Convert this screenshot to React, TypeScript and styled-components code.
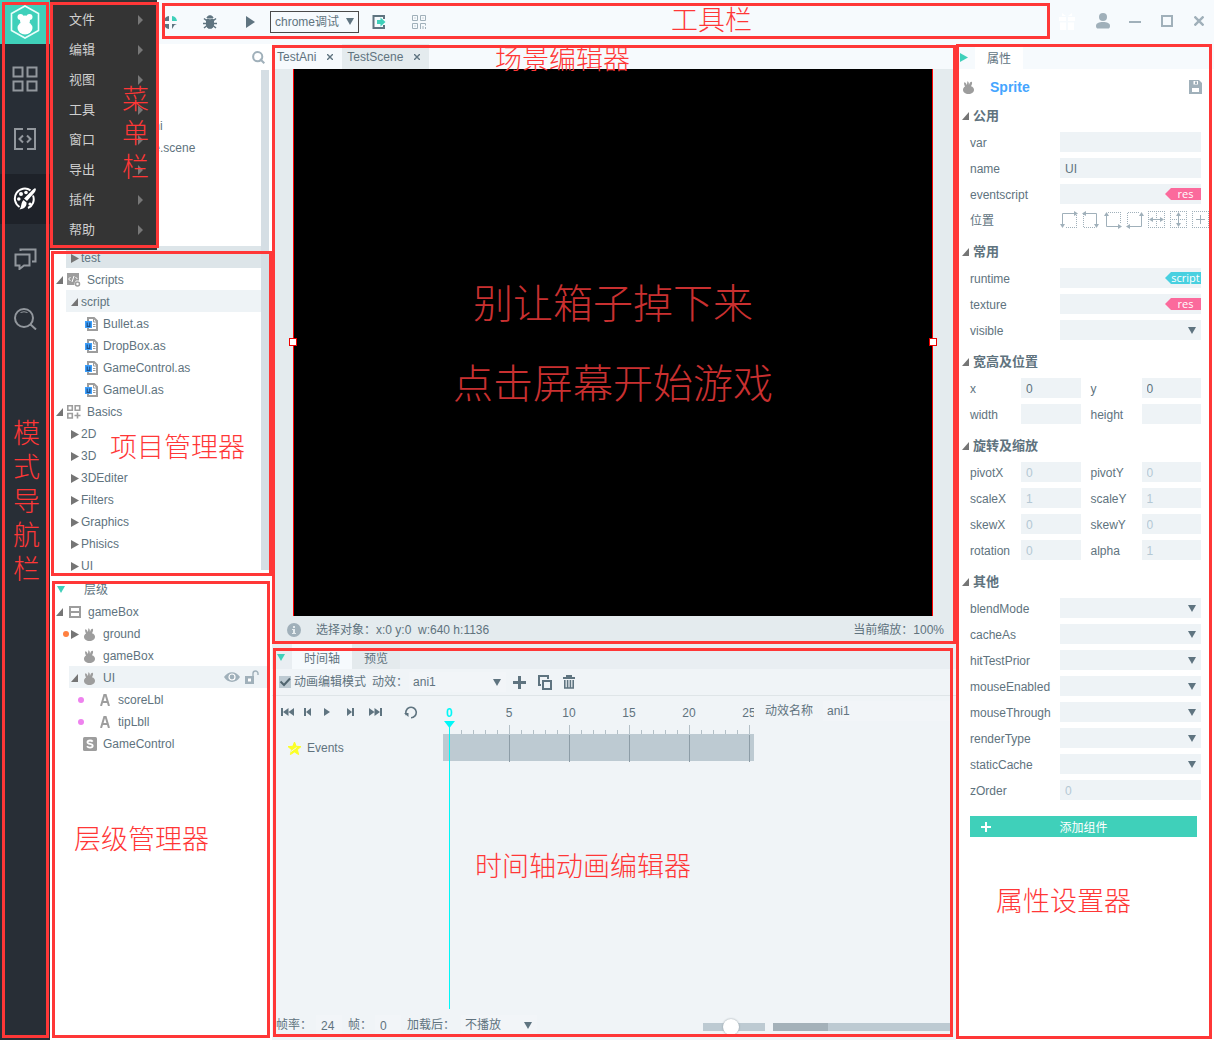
import React from "react";
import styled, { createGlobalStyle, css } from "styled-components";

const color = {
  red: "#ff3737",
  teal: "#3fd0ba",
  cyan: "#00f8f8",
  text: "#60737e",
  icon: "#9d9d9d",
  slate: "#5f7480",
  field: "#eef3f6",
  bar: "#f6fafd",
  mute: "#a0b0ba",
};

const GlobalStyle = createGlobalStyle`
  * { box-sizing: border-box; }
  body { margin: 0; background: #fff; }
  body, button, input, select {
    font-family: "Liberation Sans", "Noto Sans CJK SC", sans-serif;
    font-size: 12px;
    line-height: 16px;
    color: ${color.text};
  }
  button { border: 0; padding: 0; background: none; cursor: pointer; }
  ul { list-style: none; margin: 0; padding: 0; }
  h2, p { margin: 0; }
  svg { display: block; flex: none; }
`;

/* ---------- shell ---------- */

const Shell = styled.div`
  position: relative;
  display: grid;
  grid-template-columns: 50px 222px minmax(0, 1fr) 258px;
  grid-template-rows: 44px minmax(0, 1fr);
  height: 100vh;
  min-height: 900px;
`;

const Callout = styled.div<{ $inset: string }>`
  position: absolute;
  inset: ${(p) => p.$inset};
  border: 3px solid ${color.red};
  pointer-events: none;
  z-index: 4;
`;

const CalloutLabel = styled.span<{ $left: number; $top: number; $vertical?: boolean }>`
  position: absolute;
  left: ${(p) => p.$left}px;
  top: ${(p) => p.$top}px;
  font-size: 27px;
  line-height: 34px;
  font-weight: 300;
  color: ${color.red};
  pointer-events: none;
  z-index: 5;
  ${(p) => (p.$vertical ? css`width: 27px; word-break: break-all;` : css`white-space: nowrap;`)}
`;

/* ---------- mode rail ---------- */

const Rail = styled.nav`
  position: relative;
  grid-row: 1 / 3;
  display: flex;
  flex-direction: column;
  gap: 10px;
  background: #282e36;
`;

const Logo = styled.div`
  display: flex;
  align-items: center;
  justify-content: center;
  height: 44px;
  background: ${color.teal};
`;

const RailButton = styled.button<{ $active?: boolean }>`
  display: flex;
  align-items: center;
  justify-content: center;
  height: 50px;
  color: ${(p) => (p.$active ? "#fff" : "#92979d")};
  background: ${(p) => (p.$active ? "#1e2229" : "transparent")};
`;

/* ---------- menu ---------- */

const Menu = styled.div`
  position: absolute;
  left: 50px;
  top: 0;
  width: 107px;
  height: 250px;
  padding-top: 5px;
  background: #343434;
  z-index: 3;
`;

const MenuItem = styled.button`
  display: flex;
  align-items: center;
  justify-content: space-between;
  width: 100%;
  height: 30px;
  padding: 0 14px 0 19px;
  font-size: 13px;
  color: #cfcfcf;
`;

/* ---------- toolbar ---------- */

const Toolbar = styled.header`
  position: relative;
  grid-column: 2 / 5;
  display: flex;
  align-items: center;
  padding-left: 100px;
  background: ${color.bar};
`;

const ToolButton = styled.button<{ $w?: number }>`
  display: flex;
  align-items: center;
  justify-content: center;
  width: ${(p) => p.$w ?? 40}px;
  height: 32px;
  color: ${color.slate};
`;

const WindowButtons = styled.div`
  display: flex;
  margin: 0 -1px 2px auto;
  button { color: ${color.mute}; }
  button:first-child { color: #fff; margin-right: 4px; }
`;

/* ---------- shared selects and inputs ---------- */

const SelectWrap = styled.span<{ $w?: number; $outlined?: boolean; $plain?: boolean }>`
  position: relative;
  display: block;
  width: ${(p) => (p.$w ? `${p.$w}px` : "100%")};
  select {
    display: block;
    appearance: none;
    width: 100%;
    height: ${(p) => (p.$outlined ? 22 : 20)}px;
    padding: 0 4px;
    border: ${(p) => (p.$outlined ? "1px solid #4a4a4a" : "0")};
    border-radius: 0;
    background: ${(p) => (p.$outlined ? "transparent" : p.$plain ? "#f2f5f8" : color.field)};
  }
  svg {
    position: absolute;
    right: 5px;
    top: 7px;
    pointer-events: none;
  }
`;

const Field = styled.input`
  display: block;
  width: 100%;
  min-width: 0;
  height: 20px;
  padding: 1px 5px 0;
  border: 0;
  background: ${color.field};
  &::placeholder { color: #b4c8d4; opacity: 1; }
`;

/* ---------- left column ---------- */

const Side = styled.aside`
  display: grid;
  grid-template-rows: 532px minmax(0, 1fr);
  background: #fff;
`;

const Pane = styled.section`
  position: relative;
  min-height: 0;
`;

const SearchRow = styled.div`
  display: flex;
  justify-content: flex-end;
  align-items: center;
  height: 26px;
  padding-right: 7px;
  color: ${color.mute};
`;

const Scroller = styled.div`
  margin-right: 3px;
  display: grid;
  grid-template-columns: 1fr 8px;
`;

const ScrollThumb = styled.div`
  height: 500px;
  background: #d5dee4;
`;

const PagesTree = styled.ul`
  height: 176px;
  padding-top: 44px;
`;

const Branch = styled.ul<{ $pad: number }>`
  padding-left: ${(p) => p.$pad}px;
`;

const Row = styled.li<{ $indent: number; $fill?: string }>`
  position: relative;
  display: flex;
  align-items: center;
  height: 22px;
  padding: 2px 0 0 ${(p) => p.$indent}px;
  background: ${(p) => p.$fill ?? "transparent"};
  white-space: nowrap;
`;

const Slot = styled.span<{ $w: number }>`
  display: flex;
  flex: none;
  width: ${(p) => p.$w}px;
  color: ${color.icon};
`;

const Dot = styled.i<{ $left: number; $color: string }>`
  position: absolute;
  left: ${(p) => p.$left}px;
  top: 9px;
  width: 6px;
  height: 6px;
  border-radius: 50%;
  background: ${(p) => p.$color};
`;

const RowTools = styled.span`
  display: flex;
  align-items: center;
  gap: 5px;
  margin-left: auto;
  padding: 0 8px 2px 0;
  color: ${color.mute};
`;

const LayerTree = styled.div`
  margin-right: 5px;
`;

const PaneTitle = styled.div`
  display: flex;
  align-items: center;
  gap: 19px;
  height: 24px;
  padding: 3px 0 0 7px;
`;

/* ---------- scene ---------- */

const Center = styled.main`
  display: grid;
  grid-template-rows: minmax(0, 1fr) 396px;
  min-width: 0;
`;

const Scene = styled.section`
  position: relative;
  display: flex;
  flex-direction: column;
  min-height: 0;
  background: #e4ebee;
`;

const TabStrip = styled.div<{ $tint?: string }>`
  display: flex;
  flex: none;
  height: 25px;
  background: ${(p) => p.$tint ?? color.bar};
`;

const SceneTab = styled.button<{ $selected?: boolean }>`
  display: flex;
  align-items: center;
  gap: 11px;
  padding: 0 9px 0 5px;
  background: ${(p) => (p.$selected ? "#e4ebee" : "transparent")};
`;

const StageArea = styled.div`
  flex: 1;
  min-height: 0;
  padding: 0 23px 0 21px;
`;

const Stage = styled.div`
  position: relative;
  display: flex;
  flex-direction: column;
  align-items: center;
  justify-content: center;
  height: 100%;
  padding-top: 2px;
  border: solid #ff0000;
  border-width: 0 1px;
  background: #000;
`;

const StageText = styled.p`
  font-size: 40px;
  line-height: 80px;
  font-weight: 300;
  color: #c93030;
  white-space: nowrap;
`;

const Handle = styled.i<{ $side: "left" | "right" }>`
  position: absolute;
  ${(p) => p.$side}: -5px;
  top: calc(50% - 5px);
  width: 8px;
  height: 8px;
  border: 1px solid #e00;
  background: #fff;
`;

const Status = styled.div`
  display: flex;
  flex: none;
  align-items: center;
  height: 28px;
  padding: 0 12px 0 15px;
  white-space: pre;
`;

const StatusText = styled.span<{ $end?: boolean }>`
  margin-left: ${(p) => (p.$end ? "auto" : "15px")};
`;

/* ---------- timeline ---------- */

const Timeline = styled.section`
  position: relative;
  display: flex;
  flex-direction: column;
  background: #f0f4f7;
`;

const PanelTab = styled.button<{ $fill: string }>`
  padding: 4px 12px 0;
  background: ${(p) => p.$fill};
`;

const TabMark = styled.span<{ $w: number; $x: number }>`
  display: flex;
  align-items: center;
  width: ${(p) => p.$w}px;
  padding: 1px 0 0 ${(p) => p.$x}px;
`;

const AnimBar = styled.div`
  display: flex;
  flex: none;
  align-items: center;
  height: 27px;
  padding-left: 7px;
  border-bottom: 1px solid #dfe5e8;
`;

const Check = styled.label`
  display: flex;
  align-items: center;
  gap: 3px;
  margin-right: 6px;
  input {
    appearance: none;
    width: 12px;
    height: 12px;
    margin: 0;
    background: #bdcad2;
  }
  span { position: relative; display: flex; }
  svg { position: absolute; left: 0; top: 0; pointer-events: none; }
`;

const Inline = styled.label<{ $gap?: number }>`
  display: flex;
  align-items: center;
  gap: ${(p) => p.$gap ?? 0}px;
  white-space: nowrap;
`;

const Tracks = styled.div`
  display: grid;
  flex: 1;
  grid-template-columns: 171px 311px minmax(0, 1fr);
`;

const Playback = styled.div`
  display: flex;
  align-items: center;
  height: 32px;
  padding-left: 5px;
`;

const EventRow = styled.div`
  display: flex;
  align-items: center;
  gap: 6px;
  height: 40px;
  padding-left: 16px;
`;

const Frames = styled.div`
  position: relative;
  display: flex;
  flex-direction: column;
  overflow: hidden;
`;

const FrameNumbers = styled.div`
  display: flex;
  height: 29px;
  padding-top: 9px;
  margin-left: -24px;
  span { flex: 0 0 60px; text-align: center; }
  span:first-child { color: ${color.cyan}; font-weight: 700; }
`;

const Playhead = styled.div`
  position: absolute;
  left: 1px;
  top: 25px;
  bottom: 1px;
  width: 11px;
  background: linear-gradient(${color.cyan}, ${color.cyan}) 5px 0 / 1px 100% no-repeat;
`;

const AnimName = styled.div`
  padding: 5px 6px 0 11px;
`;

const NameField = styled(Field)`
  padding: 0 4px;
  background: #f2f5f8;
`;

const Footer = styled.footer`
  display: flex;
  flex: none;
  align-items: center;
  gap: 6px;
  height: 30px;
  padding: 0 6px 0 4px;
`;

const TinyField = styled(Field)`
  width: 26px;
  background: #f2f5f8;
`;

const Zoom = styled.input`
  appearance: none;
  width: 62px;
  height: 16px;
  margin: 3px 2px 0 auto;
  background: linear-gradient(#bdcad2, #bdcad2) 0 4px / 100% 8px no-repeat;
  &::-webkit-slider-thumb {
    appearance: none;
    width: 16px;
    height: 16px;
    border-radius: 50%;
    background: #fff;
    box-shadow: 0 0 2px #8b979e;
  }
`;

const HScroll = styled.div`
  width: 177px;
  height: 8px;
  margin-top: 3px;
  background: linear-gradient(#a4b1b9, #a4b1b9) 0 0 / 55px 100% no-repeat #bdcad2;
`;

/* ---------- properties ---------- */

const Props = styled.aside`
  position: relative;
  background: #fff;
`;

const SpriteHead = styled.div`
  display: flex;
  align-items: center;
  height: 28px;
  padding: 8px 12px 0 7px;
  color: ${color.icon};
  h2 { margin-left: 16px; font-size: 14px; line-height: 20px; color: #45a5ff; }
  button { margin-left: auto; color: ${color.mute}; }
`;

const GroupTitle = styled.h2`
  display: flex;
  align-items: center;
  gap: 4px;
  height: 32px;
  padding: 5px 0 0 6px;
  font-size: 13px;
  line-height: 20px;
  font-weight: 700;
`;

const Caption = styled.span`
  padding-top: 2px;
`;

const PropRow = styled.label`
  display: grid;
  grid-template-columns: 90px minmax(0, 1fr);
  align-items: center;
  height: 26px;
  padding: 0 13px 0 14px;
`;

const PairRow = styled.div`
  display: grid;
  grid-template-columns: 1fr 1fr;
  gap: 10px;
  padding: 0 13px 0 14px;
  label {
    display: grid;
    grid-template-columns: 51px minmax(0, 1fr);
    align-items: center;
    height: 26px;
  }
`;

const AlignRow = styled.div`
  display: grid;
  grid-template-columns: 90px minmax(0, 1fr);
  align-items: center;
  height: 26px;
  padding-left: 14px;
`;

const AlignIcons = styled.div`
  display: flex;
  gap: 4px;
  overflow: hidden;
  color: ${color.mute};
`;

const Tagged = styled.span`
  position: relative;
  display: block;
`;

const Tag = styled.span<{ $color: string }>`
  position: absolute;
  right: 0;
  top: 4px;
  width: 36px;
  padding-left: 5px;
  clip-path: polygon(0 50%, 6px 0, 100% 0, 100% 100%, 6px 100%);
  background: ${(p) => p.$color};
  color: #fff;
  font-family: "Open Sans", sans-serif;
  font-size: 11px;
  line-height: 12px;
  text-align: center;
`;

const AddButton = styled.button`
  display: grid;
  grid-template-columns: 32px 1fr 32px;
  align-items: center;
  justify-items: center;
  width: calc(100% - 31px);
  height: 21px;
  margin: 13px 17px 0 14px;
  background: ${color.teal};
  color: #fff;
`;

/* ---------- icons ---------- */

const Down = ({ fill = color.slate }: { fill?: string }) => (
  <svg width="8" height="7" viewBox="0 0 8 7"><path d="M0 0h8L4 7z" fill={fill} /></svg>
);
const Closed = ({ fill = "#757575" }: { fill?: string }) => (
  <svg width="8" height="9" viewBox="0 0 8 9"><path d="M0 0l8 4.500L0 9z" fill={fill} /></svg>
);
const Open = () => (
  <svg width="7" height="8" viewBox="0 0 7 8"><path d="M7 0v8H0z" fill="#757575" /></svg>
);
const Rabbit = () => (
  <svg width="11" height="13" viewBox="0 0 11 13" fill="currentColor">
    <path d="M1.300 1.400C2 .8 3.200 2.400 3.900 4.300L4.400.2C5.800.4 6 2.600 5.900 4.300 6.300 2.500 7.300.6 8.700.8c.9.600.2 3-.7 4.400C10 5.700 11 7.200 11 8.800 11 11.400 8.700 13 5.500 13S0 11.400 0 8.800C0 7.400.8 6.200 2.100 5.500 1.300 4.200.7 2 1.300 1.400z" />
  </svg>
);
const Lens = () => (
  <svg width="13" height="13" viewBox="0 0 13 13" fill="none" stroke="currentColor" strokeWidth="2">
    <circle cx="5.700" cy="5.700" r="4.600" /><path d="M8 8l4.300 4.300" />
  </svg>
);
const FileIcon = () => (
  <svg width="14" height="14" viewBox="0 0 14 14">
    <path d="M3 1h6l3 3v9H3z" fill="#fff" stroke="#9d9d9d" strokeWidth="2" />
    <path d="M8.500 1v4H12" fill="none" stroke="#9d9d9d" />
    <path d="M8 7.500h2.500M8 9.500h2.500" stroke="#9d9d9d" />
    <path d="M0 4h7v7H0z" fill="#3d9ffb" />
    <path d="M2.200 5.500v3.800h2.600V5.500" fill="none" stroke="#1d4f88" strokeWidth="1.200" />
  </svg>
);
const ScriptsIcon = () => (
  <svg width="15" height="14" viewBox="0 0 15 14">
    <path d="M1 0h12v7.500H10L8.500 10v2H1z" fill="currentColor" />
    <path d="M4.500 4L2.600 6l1.900 2M9.500 4l1.900 2M8 3L6 9" fill="none" stroke="#fff" />
    <circle cx="11.500" cy="11" r="2" fill="none" stroke="currentColor" strokeWidth="1.500" />
  </svg>
);
const BasicsIcon = () => (
  <svg width="15" height="14" viewBox="0 0 15 14" fill="none" stroke="currentColor" strokeWidth="1.600">
    <path d="M1.800.8h4.500v4.500H1.800zM9.200.8h4.500v4.500H9.200zM1.800 8.500h4.500V13H1.800zM8.500 10.500h6M11.500 7.500v6" />
  </svg>
);
const BoxIcon = () => (
  <svg width="12" height="12" viewBox="0 0 12 12" fill="none" stroke="currentColor" strokeWidth="2">
    <path d="M1 1h10v10H1zM1 6h10" />
  </svg>
);
const LabelIcon = () => (
  <svg width="10" height="12" viewBox="0 0 10 12" fill="none" stroke="currentColor" strokeWidth="2">
    <path d="M1 12L4.300 1h1.400L9 12M2.500 8h5" />
  </svg>
);
const BadgeIcon = () => (
  <svg width="14" height="14" viewBox="0 0 14 14">
    <rect width="14" height="14" rx="1.500" fill="currentColor" />
    <path d="M9.700 4.600C9 3.700 8.200 3.500 7 3.500c-1.500 0-2.500.6-2.500 1.700C4.500 7.600 9.700 6.200 9.700 8.800c0 1.200-1.200 1.800-2.700 1.800-1.300 0-2.300-.4-3-1.300" fill="none" stroke="#fff" strokeWidth="1.800" />
  </svg>
);
const EyeIcon = () => (
  <svg width="16" height="10" viewBox="0 0 16 10">
    <path d="M0 5C4-1.500 12-1.500 16 5 12 11.500 4 11.500 0 5z" fill="currentColor" />
    <circle cx="8" cy="5" r="3" fill="none" stroke="#fff" strokeWidth="1.200" />
  </svg>
);
const LockIcon = () => (
  <svg width="14" height="14" viewBox="0 0 14 14">
    <path d="M0 6h9v8H0z" fill="currentColor" /><path d="M3 8.500h3v3H3z" fill="#fff" />
    <path d="M8 6V3.500a2.500 2.500 0 0 1 5 0V5" fill="none" stroke="currentColor" strokeWidth="1.400" />
  </svg>
);
const LogoIcon = () => (
  <svg width="30" height="34" viewBox="0 0 30 34">
    <path d="M15 1l13.500 7.500v17L15 33 1.500 25.500v-17z" fill="none" stroke="#e9fffb" strokeWidth="1.600" />
    <circle cx="10.500" cy="12" r="3" fill="#fff" /><circle cx="19.500" cy="12" r="3" fill="#fff" />
    <ellipse cx="15" cy="15.500" rx="5" ry="5" fill="#fff" /><ellipse cx="15" cy="23" rx="7.500" ry="6.500" fill="#fff" />
  </svg>
);

type Glyph = () => React.ReactElement;
const railIcons: { name: string; active?: boolean; icon: Glyph }[] = [
  {
    name: "grid",
    icon: () => (
      <svg width="26" height="26" viewBox="0 0 26 26" fill="none" stroke="currentColor" strokeWidth="2">
        <path d="M1.500 1.500h9v9h-9zM15.500 1.500h9v9h-9zM1.500 15.500h9v9h-9zM15.500 15.500h9v9h-9z" />
      </svg>
    ),
  },
  {
    name: "code",
    icon: () => (
      <svg width="22" height="22" viewBox="0 0 22 22" fill="none" stroke="currentColor" strokeWidth="2">
        <path d="M9 1H1v20h8M13 1h8v20h-8M9 7.500L5.500 11 9 14.500M13 7.500l3.500 3.500-3.500 3.500" />
      </svg>
    ),
  },
  {
    name: "design",
    active: true,
    icon: () => (
      <svg width="24" height="24" viewBox="0 0 24 24">
        <path d="M17.500 3.300A10 10 0 1 0 6.500 20M20 8.500c2 5-.2 10.500-5 12.500" fill="none" stroke="currentColor" strokeWidth="2" />
        <path d="M22.500 1.500c.8.800.3 2-1 4L14 14l-3-2.500L18 4.500c2-2 3.700-3.600 4.500-3zM10.500 13l3 2.500c.3 3-1 6-7 7 2-2 1.500-7.500 4-9.500z" fill="currentColor" />
        <circle cx="8" cy="7" r="2" fill="currentColor" /><circle cx="13" cy="5.500" r="1.800" fill="currentColor" />
        <circle cx="5.800" cy="12" r="1.800" fill="currentColor" /><circle cx="17" cy="17" r="1.600" fill="currentColor" />
      </svg>
    ),
  },
  {
    name: "chat",
    icon: () => (
      <svg width="23" height="22" viewBox="0 0 23 22" fill="none" stroke="currentColor" strokeWidth="2">
        <path d="M1.500 6.500h14v11H10L5.500 21v-3.500h-4zM6.500 3V1.500h15v12H18" />
      </svg>
    ),
  },
  {
    name: "search",
    icon: () => (
      <svg width="23" height="22" viewBox="0 0 23 22" fill="none" stroke="currentColor" strokeWidth="2">
        <circle cx="10" cy="10" r="9" /><path d="M16 16l6 5.500" /><path d="M6.500 4.500q3.500-1.500 7 0" strokeWidth="1" />
      </svg>
    ),
  },
];

const StepIcon = ({ w, d }: { w: number; d: string }) => (
  <svg width={w} height="8" viewBox={`0 0 ${w} 8`} fill="currentColor"><path d={d} /></svg>
);

const playback = [
  { name: "first", w: 20, icon: <StepIcon w={13} d="M0 0h2v8H0zM7.500 0v8L2 4zM13 0v8L7.500 4z" /> },
  { name: "previous", w: 20, icon: <StepIcon w={7} d="M0 0h2v8H0zM7 0v8L2 4z" /> },
  { name: "play", w: 20, icon: <StepIcon w={6} d="M0 0l6 4-6 4z" /> },
  { name: "next", w: 26, icon: <StepIcon w={7} d="M7 0H5v8h2zM0 0v8l5-4z" /> },
  { name: "last", w: 24, icon: <StepIcon w={13} d="M13 0h-2v8h2zM5.500 0v8L11 4zM0 0v8l5.500-4z" /> },
];

const alignPaths = [
  { box: "M6 16.500h10.500V3", line: "M2.500 14V2.500H15", tips: "M0 13h5l-2.500 4zM14 0v5l4-2.500z" },
  { box: "M13 16.500H1.500V3", line: "M3 2.500h11.500V14", tips: "M12 13h5l-2.500 4zM4 0v5L0 2.500z" },
  { box: "M4 1.500h12.500V13", line: "M2.500 4v11.500H15", tips: "M0 5h5L2.500 1zM14 13v5l4-2.500z" },
  { box: "M13 1.500H1.500V13", line: "M3 15.500h12.500V4", tips: "M13 5h5l-2.500-4zM4 13v5l-4-2.500z" },
  { box: "M0 .5h17M0 16.500h17M.5 0v17M16.500 0v17M8.500 0v17", line: "M3 8.500h11", tips: "M5 6v5L1 8.500zM12 6v5l4-2.500z" },
  { box: "M0 .5h17M0 16.500h17M.5 0v17M16.500 0v17M0 8.500h17", line: "M8.500 3v11", tips: "M6 5h5L8.500 1zM6 12h5l-2.500 4z" },
  { box: "M0 .5h17M0 16.500h17M.5 0v17M16.500 0v17", line: "M4 8.500h9M8.500 4v9", tips: "" },
];

const menuItems = ["文件", "编辑", "视图", "工具", "窗口", "导出", "插件", "帮助"];
const scripts = ["Bullet.as", "DropBox.as", "GameControl.as", "GameUI.as"];
const basics = ["2D", "3D", "3DEditer", "Filters", "Graphics", "Phisics", "UI"];
const others = ["blendMode", "cacheAs", "hitTestPrior", "mouseEnabled", "mouseThrough", "renderType", "staticCache"];
const transforms: [string, string][][] = [
  [["pivotX", "0"], ["pivotY", "0"]],
  [["scaleX", "1"], ["scaleY", "1"]],
  [["skewX", "0"], ["skewY", "0"]],
  [["rotation", "0"], ["alpha", "1"]],
];

const SelectRow = ({ name }: { name: string }) => (
  <PropRow>
    <Caption>{name}</Caption>
    <SelectWrap><select defaultValue=""><option value="" /></select><Down /></SelectWrap>
  </PropRow>
);

const TextRow = ({ name, value, hint }: { name: string; value?: string; hint?: string }) => (
  <PropRow><Caption>{name}</Caption><Field defaultValue={value} placeholder={hint} /></PropRow>
);

const TagRow = ({ name, tag, tint }: { name: string; tag: string; tint: string }) => (
  <PropRow>
    <Caption>{name}</Caption>
    <Tagged><Field /><Tag $color={tint}>{tag}</Tag></Tagged>
  </PropRow>
);

const Half = ({ name, value, hint }: { name: string; value?: string; hint?: string }) => (
  <label><Caption>{name}</Caption><Field defaultValue={value} placeholder={hint} /></label>
);

const Group = ({ title }: { title: string }) => <GroupTitle><Open />{title}</GroupTitle>;

const Cross = () => (
  <svg width="6" height="6" viewBox="0 0 6 6" stroke={color.slate} strokeWidth="1.400"><path d="M0 0l6 6M6 0L0 6" /></svg>
);

const Ruler = () => {
  const minor = Array.from({ length: 26 }, (_, i) => i).filter((i) => i % 5);
  const major = [5, 10, 15, 20, 25];
  return (
    <svg width="311" height="37" viewBox="0 0 311 37" shapeRendering="crispEdges">
      <path d="M0 9h311v27H0z" fill="#bdcad2" />
      <path d={minor.map((i) => `M${i * 12 + 6.5} 5v4`).join("")} stroke="#b3bfc6" />
      <path d={major.map((i) => `M${i * 12 + 6.5} 0v9`).join("")} stroke="#b3bfc6" />
      <path d={major.map((i) => `M${i * 12 + 6.5} 10v27`).join("")} stroke="#8d9da7" />
    </svg>
  );
};

export default function App() {
  return (
    <Shell>
      <GlobalStyle />
      <Rail>
        <Logo><LogoIcon /></Logo>
        {railIcons.map(({ name, active, icon: Icon }) => (
          <RailButton key={name} $active={active} aria-label={name}><Icon /></RailButton>
        ))}
        <Callout $inset="2px 1px 2px 2px" />
        <CalloutLabel $left={13} $top={417} $vertical>模式导航栏</CalloutLabel>
      </Rail>

      <Menu>
        {menuItems.map((item) => (
          <MenuItem key={item}>{item}
            <svg width="5" height="10" viewBox="0 0 5 10"><path d="M0 0l5 5-5 5z" fill="#777" /></svg>
          </MenuItem>
        ))}
        <Callout $inset="2px -2px 2px 0" />
        <CalloutLabel $left={72} $top={83} $vertical>菜单栏</CalloutLabel>
      </Menu>

      <Toolbar>
        <ToolButton aria-label="aim">
          <svg width="15" height="15" viewBox="0 0 15 15" fill="currentColor">
            <path d="M6 1v5H1C1.500 3 3 1.500 6 1zM1 9h5v5C3 13.500 1.500 12 1 9zM9 9h5l-2.500 1L9 14z" />
            <path d="M9 1c3 .5 4.500 2 5 5H9z" fill={color.teal} />
          </svg>
        </ToolButton>
        <ToolButton aria-label="debug">
          <svg width="14" height="14" viewBox="0 0 14 14" fill="none" stroke="currentColor">
            <path d="M4 3C4 0 10 0 10 3z" fill="currentColor" />
            <path d="M3.500 4.500h3V13.500c-2-.3-3-1.500-3-3.500zM7.500 4.500h3V10c0 2-1 3.200-3 3.500z" fill="currentColor" />
            <path d="M0 8.500h3M11 8.500h3M1 3.500L3.500 5.500M13 3.500L10.500 5.500M1 13l2.500-2M13 13l-2.500-2" strokeWidth="1.600" />
          </svg>
        </ToolButton>
        <ToolButton aria-label="run">
          <svg width="9" height="12" viewBox="0 0 9 12" fill="currentColor"><path d="M0 0l9 6-9 6z" /></svg>
        </ToolButton>
        <SelectWrap $w={89} $outlined>
          <select aria-label="debug target"><option>chrome调试</option></select><Down />
        </SelectWrap>
        <ToolButton aria-label="export">
          <svg width="14" height="14" viewBox="0 0 14 14">
            <path d="M12 4V1H1.500v12H12v-3" fill="none" stroke="currentColor" strokeWidth="2" />
            <path d="M5 5h3.500V2.500L13.500 7l-5 4.500V9H5z" fill={color.teal} />
          </svg>
        </ToolButton>
        <ToolButton aria-label="qr code">
          <svg width="14" height="14" viewBox="0 0 14 14" fill="none" stroke={color.mute}>
            <path d="M.5.5h5v5h-5zM8.500.5h5v5h-5zM.5 8.500h5v5h-5zM8.500 14v-5.500h5v2M11 11v3M13.500 12v2M2.500 3h1M10.500 3h1M2.500 11h1" />
          </svg>
        </ToolButton>
        <WindowButtons>
          <ToolButton $w={32} aria-label="gift">
            <svg width="16" height="17" viewBox="0 0 16 17" fill="currentColor">
              <path d="M0 4h7v4H0zM9 4h7v4H9zM1 9.500h6V17H1zM9 9.500h6V17H9zM3 0l4 3H3zM13 0L9 3h4z" />
            </svg>
          </ToolButton>
          <ToolButton $w={32} aria-label="account">
            <svg width="14" height="16" viewBox="0 0 14 16" fill="currentColor">
              <circle cx="7" cy="4" r="4" /><path d="M0 13c0-3 3-4 7-4s7 1 7 4c0 2-1 2.500-2 2.500H2C1 15.500 0 15 0 13z" />
            </svg>
          </ToolButton>
          <ToolButton $w={32} aria-label="minimize">
            <svg width="12" height="12" viewBox="0 0 12 12" stroke="currentColor" strokeWidth="2"><path d="M0 7h12" /></svg>
          </ToolButton>
          <ToolButton $w={32} aria-label="maximize">
            <svg width="12" height="12" viewBox="0 0 12 12" fill="none" stroke="currentColor" strokeWidth="2"><path d="M1 1h10v10H1z" /></svg>
          </ToolButton>
          <ToolButton $w={32} aria-label="close">
            <svg width="10" height="10" viewBox="0 0 10 10" stroke="currentColor" strokeWidth="2.400"><path d="M.5.5l9 9M9.500.5l-9 9" /></svg>
          </ToolButton>
        </WindowButtons>
        <Callout $inset="3px 164px 5px 112px" />
        <CalloutLabel $left={621} $top={4}>工具栏</CalloutLabel>
      </Toolbar>

      <Side>
        <Pane>
          <SearchRow><Lens /></SearchRow>
          <Scroller>
            <div>
              <PagesTree>
                <Row $indent={54}>TestAni.ani</Row>
                <Row $indent={54}>TestScene.scene</Row>
              </PagesTree>
              <Branch $pad={16}>
                <Row $indent={5} $fill="#dde5e9"><Slot $w={10}><Closed /></Slot>test</Row>
              </Branch>
              <ul>
                <Row $indent={6}><Slot $w={10}><Open /></Slot><Slot $w={21}><ScriptsIcon /></Slot>Scripts</Row>
                <li>
                  <Branch $pad={16}>
                    <Row $indent={5} $fill={color.field}><Slot $w={10}><Open /></Slot>script</Row>
                    {scripts.map((s) => (
                      <Row key={s} $indent={19}><Slot $w={18}><FileIcon /></Slot>{s}</Row>
                    ))}
                  </Branch>
                </li>
                <Row $indent={6}><Slot $w={10}><Open /></Slot><Slot $w={21}><BasicsIcon /></Slot>Basics</Row>
                <li>
                  <Branch $pad={16}>
                    {basics.map((b) => (
                      <Row key={b} $indent={5}><Slot $w={10}><Closed /></Slot>{b}</Row>
                    ))}
                  </Branch>
                </li>
              </ul>
            </div>
            <ScrollThumb />
          </Scroller>
          <Callout $inset="207px 0 0 1px" />
          <CalloutLabel $left={60} $top={387}>项目管理器</CalloutLabel>
        </Pane>

        <Pane>
          <PaneTitle><Down fill={color.teal} />层级</PaneTitle>
          <LayerTree>
            <ul>
              <Row $indent={6}><Slot $w={13}><Open /></Slot><Slot $w={19}><BoxIcon /></Slot>gameBox</Row>
              <li>
                <Branch $pad={19}>
                  <Row $indent={2}><Dot $left={-6} $color="#ff8040" /><Slot $w={13}><Closed /></Slot><Slot $w={19}><Rabbit /></Slot>ground</Row>
                  <Row $indent={15}><Slot $w={19}><Rabbit /></Slot>gameBox</Row>
                  <Row $indent={2} $fill={color.field}>
                    <Slot $w={13}><Open /></Slot><Slot $w={19}><Rabbit /></Slot>UI
                    <RowTools><EyeIcon /><LockIcon /></RowTools>
                  </Row>
                  <Row $indent={31}><Dot $left={9} $color="#ee82ee" /><Slot $w={18}><LabelIcon /></Slot>scoreLbl</Row>
                  <Row $indent={31}><Dot $left={9} $color="#ee82ee" /><Slot $w={18}><LabelIcon /></Slot>tipLbll</Row>
                  <Row $indent={14}><Slot $w={20}><BadgeIcon /></Slot>GameControl</Row>
                </Branch>
              </li>
            </ul>
          </LayerTree>
          <Callout $inset="5px 2px 2px 2px" />
          <CalloutLabel $left={24} $top={247}>层级管理器</CalloutLabel>
        </Pane>
      </Side>

      <Center>
        <Scene>
          <TabStrip>
            <SceneTab>TestAni<Cross /></SceneTab>
            <SceneTab $selected>TestScene<Cross /></SceneTab>
          </TabStrip>
          <StageArea>
            <Stage>
              <StageText>别让箱子掉下来</StageText>
              <StageText>点击屏幕开始游戏</StageText>
              <Handle $side="left" /><Handle $side="right" />
            </Stage>
          </StageArea>
          <Status>
            <svg width="14" height="14" viewBox="0 0 14 14"><circle cx="7" cy="7" r="7" fill={color.mute} /><path d="M6 3h2v2H6zM5 6h3v4h1v1H5v-1h1V7H5z" fill="#e4ebee" /></svg>
            <StatusText>选择对象：x:0 y:0  w:640 h:1136</StatusText>
            <StatusText $end>当前缩放：100%</StatusText>
          </Status>
          <Callout $inset="1px 0 0 0" />
          <CalloutLabel $left={223} $top={-1}>场景编辑器</CalloutLabel>
        </Scene>

        <Timeline>
          <TabStrip $tint="#e9eef2">
            <TabMark $w={20} $x={5}><Down fill={color.teal} /></TabMark>
            <PanelTab $fill={color.bar}>时间轴</PanelTab>
            <PanelTab $fill="#e4eaed">预览</PanelTab>
          </TabStrip>
          <AnimBar>
            <Check>
              <span>
                <input type="checkbox" defaultChecked />
                <svg width="12" height="12" viewBox="0 0 12 12"><path d="M1.500 5.500l3.500 3.500 6-6.500" fill="none" stroke="#51656f" strokeWidth="2" /></svg>
              </span>
              动画编辑模式
            </Check>
            <Inline $gap={1}>动效：
              <SelectWrap $w={97} $plain><select><option>ani1</option></select><Down /></SelectWrap>
            </Inline>
            <ToolButton $w={26} aria-label="add">
              <svg width="13" height="13" viewBox="0 0 13 13" stroke="currentColor" strokeWidth="3"><path d="M0 6.500h13M6.500 0v13" /></svg>
            </ToolButton>
            <ToolButton $w={26} aria-label="copy">
              <svg width="14" height="15" viewBox="0 0 14 15" fill="none" stroke="currentColor" strokeWidth="2"><path d="M5 6h8v8H5zM3 10H1V1h9v3" /></svg>
            </ToolButton>
            <ToolButton $w={22} aria-label="delete">
              <svg width="12" height="14" viewBox="0 0 12 14" fill="none" stroke="currentColor"><path d="M3 1h6" strokeWidth="2" /><path d="M0 3h12" strokeWidth="2" /><path d="M1.800 5v8h8.400V5M4.600 5v8M7.400 5v8" strokeWidth="1.600" /></svg>
            </ToolButton>
          </AnimBar>
          <Tracks>
            <div>
              <Playback>
                {playback.map((b) => <ToolButton key={b.name} $w={b.w} aria-label={b.name}>{b.icon}</ToolButton>)}
                <ToolButton $w={48} aria-label="loop">
                  <svg width="14" height="13" viewBox="0 0 14 13" fill="none" stroke="currentColor" strokeWidth="1.600"><path d="M2.500 9A5.200 5.200 0 1 1 7 11.700" /><path d="M0 7h4.500v4z" fill="currentColor" stroke="none" /></svg>
                </ToolButton>
              </Playback>
              <EventRow>
                <svg width="13" height="13" viewBox="0 0 13 13"><path d="M6.500 0l1.700 4.300L13 4.600 9.400 7.700l1.200 4.900-4.100-2.600-4.100 2.600 1.200-4.900L0 4.600l4.800-.3z" fill="#fbff26" stroke="#fbff26" /><path d="M3 9.500L8.500 5.500" stroke="#f0f4f7" /></svg>
                Events
              </EventRow>
            </div>
            <Frames>
              <FrameNumbers>{[0, 5, 10, 15, 20, 25].map((n) => <span key={n}>{n}</span>)}</FrameNumbers>
              <Ruler />
              <Playhead><svg width="11" height="7" viewBox="0 0 11 7"><path d="M0 0h11L5.500 7z" fill={color.cyan} /></svg></Playhead>
            </Frames>
            <AnimName><Inline $gap={10}>动效名称<NameField defaultValue="ani1" /></Inline></AnimName>
          </Tracks>
          <Footer>
            <Inline $gap={4}>帧率：<TinyField defaultValue="24" /></Inline>
            <Inline $gap={3}>帧：<TinyField defaultValue="0" /></Inline>
            <Inline $gap={6}>加载后：<SelectWrap $w={76} $plain><select><option>不播放</option></select><Down /></SelectWrap></Inline>
            <Zoom type="range" aria-label="timeline zoom" defaultValue={43} />
            <HScroll />
          </Footer>
          <Callout $inset="4px 3px 3px 1px" />
          <CalloutLabel $left={203} $top={206}>时间轴动画编辑器</CalloutLabel>
        </Timeline>
      </Center>

      <Props>
        <TabStrip>
          <TabMark $w={19} $x={4}><Closed fill={color.teal} /></TabMark>
          <PanelTab $fill="#fff">属性</PanelTab>
        </TabStrip>
        <SpriteHead>
          <Rabbit /><h2>Sprite</h2>
          <button aria-label="save">
            <svg width="13" height="14" viewBox="0 0 13 14"><path d="M0 0h10l3 3v11H0z" fill="currentColor" /><path d="M3 8h7v4H3zM4.500 1H9v3.500H4.500z" fill="#fff" /><path d="M6 1.500h2v2.500H6z" fill="currentColor" /></svg>
          </button>
        </SpriteHead>
        <Group title="公用" />
        <TextRow name="var" />
        <TextRow name="name" value="UI" />
        <TagRow name="eventscript" tag="res" tint="#fb6a9c" />
        <AlignRow>
          <Caption>位置</Caption>
          <AlignIcons>
            {alignPaths.map((p, i) => (
              <svg key={i} width="18" height="18" viewBox="0 0 18 18" fill="none" stroke="currentColor">
                <path d={p.box} strokeDasharray="1 1" shapeRendering="crispEdges" /><path d={p.line} /><path d={p.tips} fill="currentColor" stroke="none" />
              </svg>
            ))}
          </AlignIcons>
        </AlignRow>
        <Group title="常用" />
        <TagRow name="runtime" tag="script" tint="#48d0e0" />
        <TagRow name="texture" tag="res" tint="#fb6a9c" />
        <SelectRow name="visible" />
        <Group title="宽高及位置" />
        <PairRow><Half name="x" value="0" /><Half name="y" value="0" /></PairRow>
        <PairRow><Half name="width" /><Half name="height" /></PairRow>
        <Group title="旋转及缩放" />
        {transforms.map((pair) => (
          <PairRow key={pair[0][0]}>
            {pair.map(([name, hint]) => <Half key={name} name={name} hint={hint} />)}
          </PairRow>
        ))}
        <Group title="其他" />
        {others.map((name) => <SelectRow key={name} name={name} />)}
        <TextRow name="zOrder" hint="0" />
        <AddButton>
          <svg width="10" height="10" viewBox="0 0 10 10" stroke="#fff" strokeWidth="2"><path d="M0 5h10M5 0v10" /></svg>
          <Caption>添加组件</Caption>
        </AddButton>
        <Callout $inset="0 2px 1px 0" />
        <CalloutLabel $left={40} $top={841}>属性设置器</CalloutLabel>
      </Props>
    </Shell>
  );
}
